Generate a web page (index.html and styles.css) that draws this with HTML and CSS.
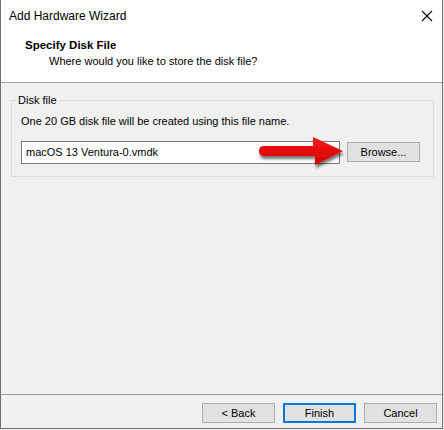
FILE: index.html
```html
<!DOCTYPE html>
<html>
<head>
<meta charset="utf-8" />
<title>Add Hardware Wizard</title>
<link rel="stylesheet" href="styles.css">
</head>
<body>
<div id="wnd">
    <div id="cap">
        <span class="cap-text">Add Hardware Wizard</span>
        <svg class="close" width="12" height="12" viewBox="0 0 12 12"><path d="M1 1L11 11M11 1L1 11" stroke="#000" stroke-width="1.1" fill="none"/></svg>
    </div>
    <div id="hd">
        <div class="hd-title">Specify Disk File</div>
        <div class="hd-sub">Where would you like to store the disk file?</div>
    </div>
    <div id="bd">
        <fieldset class="grp">
            <legend>Disk file</legend>
            <div class="grp-note">One 20 GB disk file will be created using this file name.</div>
            <div class="file-row">
                <div class="file-box">macOS 13 Ventura-0.vmdk</div>
                <div class="btn browse">Browse...</div>
            </div>
        </fieldset>
        <svg class="arrow" width="96" height="44" viewBox="0 0 96 44">
            <defs>
                <filter id="sh" x="-20%" y="-30%" width="140%" height="170%">
                    <feGaussianBlur in="SourceAlpha" stdDeviation="1.6"/>
                    <feOffset dx="1" dy="3" result="b"/>
                    <feComponentTransfer><feFuncA type="linear" slope="0.55"/></feComponentTransfer>
                    <feMerge><feMergeNode/><feMergeNode in="SourceGraphic"/></feMerge>
                </filter>
                <linearGradient id="rg" x1="0" y1="0" x2="0" y2="1">
                    <stop offset="0" stop-color="#f51a1a"/>
                    <stop offset="1" stop-color="#d20000"/>
                </linearGradient>
            </defs>
            <path filter="url(#sh)" fill="url(#rg)" d="M9 13 L58 13 L58 4 L88 18 L60 32 L60 23 L9 23 Q4 23 4 18 Q4 13 9 13 Z"/>
        </svg>
    </div>
    <div id="ft">
        <div class="btn">&lt; Back</div>
        <div class="btn on">Finish</div>
        <div class="btn">Cancel</div>
    </div>
</div>
</body>
</html>
```

FILE: styles.css
```css
html * { margin:0; padding:0; box-sizing:border-box; }
body { background:#f0f0f0; font-family:"Liberation Sans", Arial, sans-serif; font-size:11px; color:#000; }

#wnd {
	width:443px;
	height:429px;
	border:1px solid #6f6f6f;
	border-top:none;
	display:flex;
	flex-direction:column;
	background:#f0f0f0;
}
#cap {
	height:31px;
	background:#fff;
	display:flex;
	align-items:center;
	justify-content:space-between;
	padding:1px 9px 0 8px;
}
.cap-text { font-size:12px; }
.close { margin-top:-1px; }

#hd {
	height:52px;
	background:#fff;
	border-bottom:1px solid #a0a0a0;
	padding:6px 0 0 24px;
}
.hd-title { font-weight:bold; font-size:11.5px; line-height:16px; }
.hd-sub { padding-left:24px; line-height:16px; }

#bd {
	flex:1;
	position:relative;
	padding:10px 8px 0 10px;
}
.grp {
	border:1px solid #dcdcdc;
	padding:7px 9px 9px 9px;
	height:84px;
}
.grp legend {
	margin-left:-5px;
	padding:0 2px;
	line-height:14px;
}
.grp-note { line-height:14px; margin-bottom:13px; }
.file-row {
	display:flex;
	align-items:center;
	gap:7px;
}
.file-box {
	width:319px;
	height:23px;
	border:1px solid #7a7a7a;
	background:#fff;
	padding:4px 0 0 4px;
}
.btn {
	width:73px;
	height:20px;
	background:#e1e1e1;
	border:1px solid #adadad;
	text-align:center;
	line-height:18px;
}
.browse { margin-top:-1px; }
.on {
	border:2px solid #0078d7;
	line-height:16px;
}
.arrow {
	position:absolute;
	left:254px;
	top:50px;
}

#ft {
	height:34px;
	border-top:1px solid #a0a0a0;
	display:flex;
	justify-content:flex-end;
	gap:8px;
	padding:8px 5px 0 0;
}
#ft .btn { height:20px; }
```
